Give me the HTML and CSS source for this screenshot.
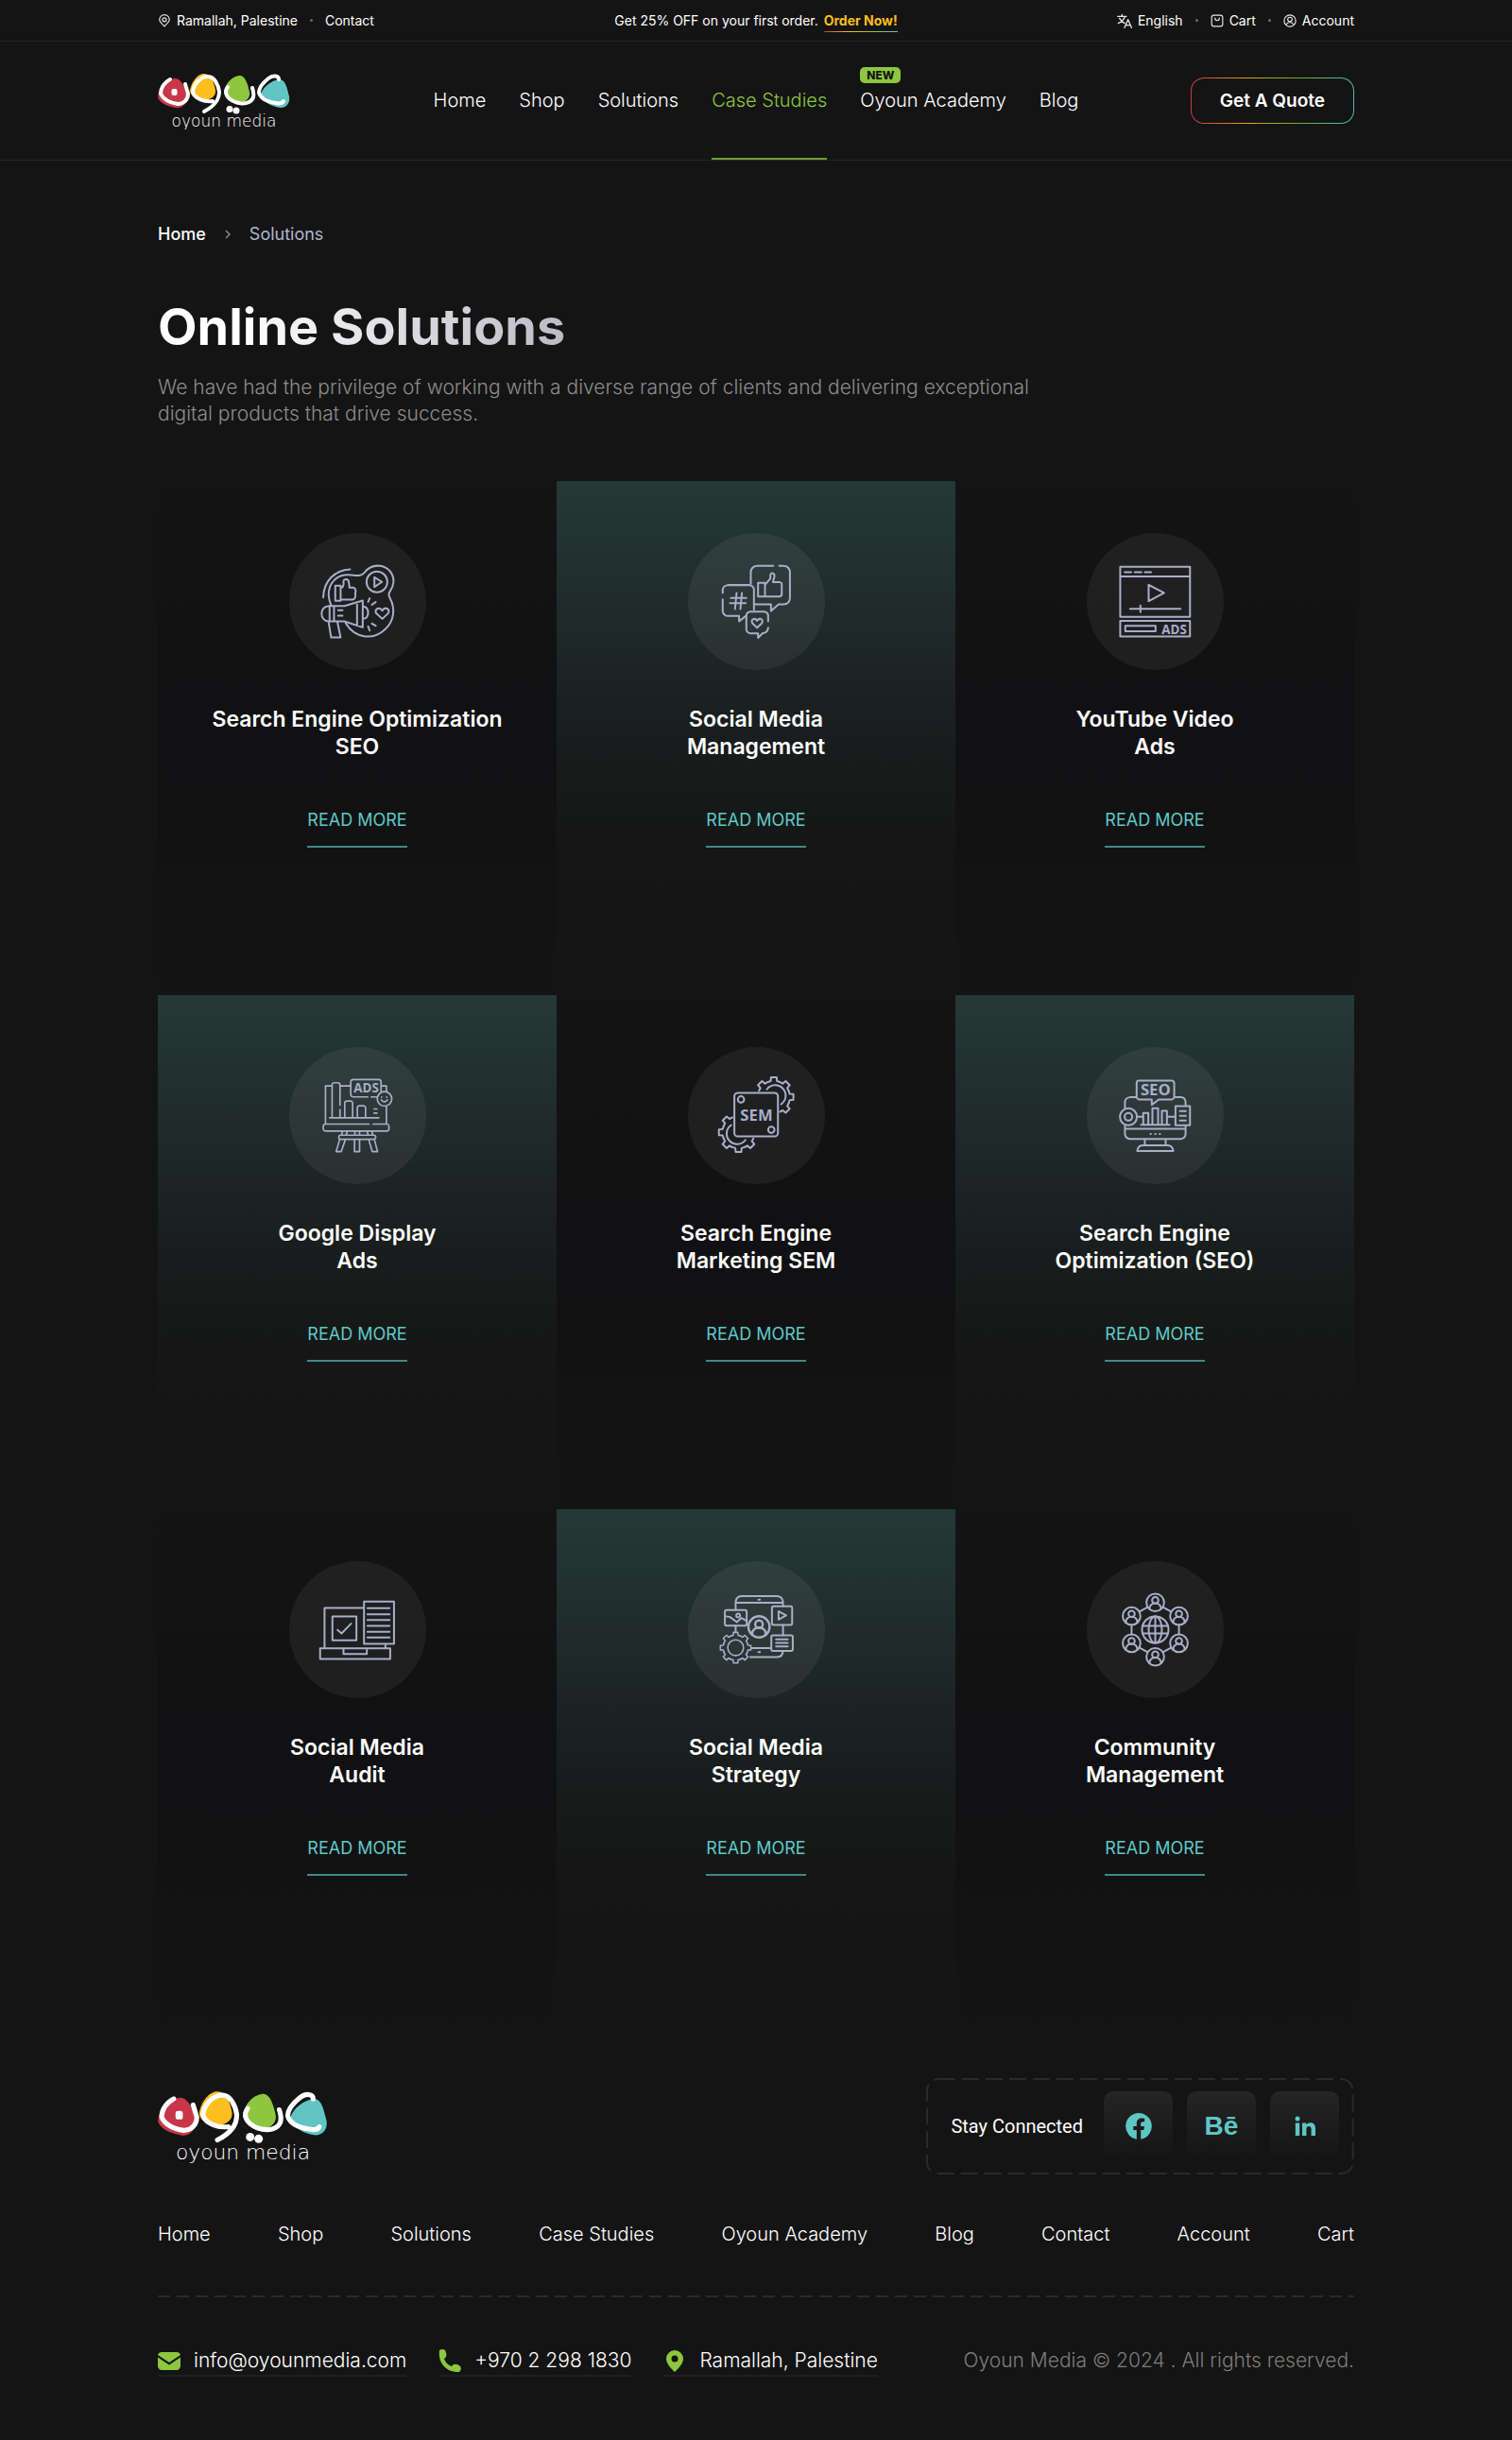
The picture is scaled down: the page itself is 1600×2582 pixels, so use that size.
FILE: index.html
```html
<!DOCTYPE html>
<html lang="en">
<head>
<meta charset="utf-8">
<meta name="viewport" content="width=device-width, initial-scale=1">
<title>Oyoun Media – Online Solutions</title>
<link rel="stylesheet" href="styles.css">
</head>
<body>
<svg class="sprite" aria-hidden="true">
  <symbol id="pin" viewBox="0 0 24 24"><path d="M12 22C8 18 3 14 3 10A9 9 0 0 1 21 10C21 14 16 18 12 22Z"/><circle cx="12" cy="10" r="3.500"/></symbol>
  <g id="tooth"><path d="M-19.500 -47A51 51 0 0 1 -10 -50L-9 -62H9L10 -50A51 51 0 0 1 19.500 -47"/></g>
  <g id="person"><circle r="28"/><circle cy="-7" r="10"/><path d="M-18 21V18A18 16 0 0 1 18 18V21"/></g>
</svg>

<div class="topbar">
  <div class="container topbar-grid">
    <div class="top-group">
      <a href="#"><svg class="ico ico-line" viewBox="0 0 24 24"><use href="#pin"/></svg>Ramallah, Palestine</a>
      <span class="dot"></span>
      <a href="#">Contact</a>
    </div>
    <p class="promo">Get 25% OFF on your first order. <a class="order" href="#">Order Now!</a></p>
    <div class="top-group top-right">
      <a href="#"><svg class="ico ico-line ico-lang" viewBox="0 0 24 24"><path d="M1 5H15M8 2V5M13 5C11 10 7 14 2 16M4 8C6 12 9 14 12 16M12 23L17.500 10L23 23M14 19H21"/></svg>English</a>
      <span class="dot"></span>
      <a href="#"><svg class="ico ico-line" viewBox="0 0 24 24"><rect x="2" y="2" width="20" height="20" rx="4"/><path d="M8 7C8 13 16 13 16 7"/></svg>Cart</a>
      <span class="dot"></span>
      <a href="#"><svg class="ico ico-line" viewBox="0 0 24 24"><circle cx="12" cy="12" r="10.500"/><circle cx="12" cy="9.500" r="4"/><path d="M6 18C8 14 16 14 18 18"/></svg>Account</a>
    </div>
  </div>
</div>

<header class="header">
  <div class="container header-grid">
    <a class="logo" href="#" aria-label="Oyoun Media"><svg viewBox="0 0 140 60">
      <g id="logo">
        <path fill="#c8364a" d="M19 6C26 7 30 18 31 27C30 34 25 38 19 37C8 35 1 31 0 25C1 16 10 6 19 6Z"/>
        <path fill="#fcbf1e" d="M48 1C41 2 35 11 34 19C35 26 42 29 50 29C58 28 62 23 61 18C59 9 56 0 48 1Z"/>
        <path fill="#8dc63f" d="M86 3C78 4 71 12 70 21C72 28 82 31 89 31C95 30 98 25 97 20C95 11 92 2 86 3Z"/>
        <path fill="#62c4c3" d="M129 7C120 8 111 15 109 23C111 31 121 36 130 37C137 37 140 31 139 25C137 17 135 7 129 7Z"/>
        <g fill="none" stroke="#fff" stroke-width="4" stroke-linecap="round" stroke-linejoin="round">
          <path d="M13 7C7 10 3 16 3 22C6 29 15 32 21 33C27 33 32 29 32 22L29 12"/>
          <path d="M58 30C50 31 39 28 37 20C38 12 45 4 53 4C60 4 64 13 65 20C65 29 60 35 49 41"/>
          <path d="M74 15C70 20 72 27 82 31C91 34 99 32 101 26C102 22 101 19 100 16"/>
          <path d="M128 7C128 3 122 2 117 6C112 10 107 15 107 21C109 28 118 31 125 32C129 33 132 32 133 30"/>
        </g>
        <g fill="#fff"><rect x="14.500" y="17" width="6" height="7" rx="2"/><circle cx="76" cy="38.500" r="3.500"/><circle cx="83" cy="40" r="3.500"/></g>
        <text class="logo-text" x="70" y="57" text-anchor="middle">oyoun media</text>
      </g>
    </svg></a>
    <nav class="nav">
      <a href="#">Home</a>
      <a href="#">Shop</a>
      <a href="#">Solutions</a>
      <a class="active" href="#">Case Studies</a>
      <a href="#">Oyoun Academy<span class="badge">NEW</span></a>
      <a href="#">Blog</a>
    </nav>
    <button class="quote" type="button">Get A Quote</button>
  </div>
</header>

<main class="container">
  <nav class="crumbs" aria-label="Breadcrumb">
    <a href="#">Home</a>
    <svg class="chevron" viewBox="0 0 8 12"><path d="M2 2L6 6L2 10"/></svg>
    <span>Solutions</span>
  </nav>
  <h1>Online Solutions</h1>
  <p class="intro">We have had the privilege of working with a diverse range of clients and delivering exceptional digital products that drive success.</p>

  <section class="grid">
    <article class="card">
      <svg class="art" viewBox="47 46 434 434">
        <path d="M240 161C190 163 156 200 155 250"/>
        <path d="M180 275C160 230 180 195 210 182C245 170 265 192 285 172C300 152 320 147 340 151C372 160 384 190 374 216C366 234 358 238 366 252C384 285 380 325 350 352C315 384 258 384 226 332"/>
        <circle cx="325" cy="201" r="33"/><path d="M317 186V217L341 201Z"/>
        <path d="M193 213H210V261H193ZM210 220C222 218 220 207 219 198C222 189 235 192 236 202L238 219H250C260 222 258 232 256 238C259 246 256 256 248 257H210"/>
        <path d="M175 277H222L280 260V345L222 326H175ZM189 277V326M262 266V339M175 277C143 275 140 328 175 326M172 329L180 377H210L200 329M202 291H216M202 308H216M282 280C302 277 302 320 282 317"/>
        <path d="M342 318L322 300C316 286 334 278 342 292C350 278 368 286 361 300ZM297 264L302 253M309 273L321 265M297 342L302 355M309 333L321 340"/>
      </svg>
      <h2>Search Engine Optimization<br>SEO</h2>
      <a class="more" href="#">READ MORE</a>
    </article>
    <article class="card teal">
      <svg class="art" viewBox="54 46 434 434">
        <path d="M324 150H273Q253 152 253 172V208M343 150H357Q377 152 377 172V252Q376 272 357 272H341L317 293V272H266"/>
        <path d="M276 204H298V247H276ZM298 210L315 190V178C319 170 329 173 328 184L323 202H345Q353 204 351 212V240Q350 247 343 247H298"/>
        <path d="M164 236V226Q166 213 180 211H248Q262 213 263 225V289M164 256V294Q166 307 180 309H216V326L237 309"/>
        <path d="M208 236L203 287M225 236L220 287M190 252H239M187 268H237"/>
        <path d="M308 326V306Q305 296 296 295H252Q240 296 239 308V352Q240 362 252 364H276V378L290 364Q307 362 308 346M273 346L258 332C252 319 266 313 273 324C281 313 295 319 288 332Z"/>
      </svg>
      <h2>Social Media<br>Management</h2>
      <a class="more" href="#">READ MORE</a>
    </article>
    <article class="card">
      <svg class="art" viewBox="60 46 434 434">
        <path d="M166 153H387V312H166ZM166 184H387M180 170H201M212 170H233M244 170H264M256 210V262L305 236ZM197 286H357M230 276V297M166 324H387V374H166ZM182 340H278V357H182Z"/>
        <text x="337" y="365">ADS</text>
      </svg>
      <h2>YouTube Video<br>Ads</h2>
      <a class="more" href="#">READ MORE</a>
    </article>

    <article class="card teal">
      <svg class="art art-fine" viewBox="47 47 434 434">
        <path d="M183 170H162V290M183 268V165Q184 160 190 160H202Q208 161 208 167V231M208 170H240M208 245V268M175 271H331M223 268V222Q224 218 230 218H242Q248 219 248 224V268M263 268V238Q264 233 270 233H283Q289 234 289 239V268M316 243H325M316 256H325"/>
        <path d="M296 205H249Q242 204 242 197V157Q243 150 250 150H331Q338 151 338 157V188M307 205H326M338 170H355V188M355 236V290M300 291H162Q155 292 155 298V308Q156 313 162 313H357Q363 312 363 306V297Q362 291 357 291H313"/>
        <circle cx="349" cy="211" r="23"/><path d="M339 214C343 222 354 222 358 214M340 205V206M356 205V206M208 326H316Q322 327 321 333Q320 339 315 339H210Q204 338 204 332Q204 327 208 326ZM213 325L216 314M228 325L231 314M255 325V314M270 325V314M297 325L294 314M312 325L309 314M207 340L196 378H212L225 340M254 340V378H270V340M299 340L310 378H327L317 340"/>
        <text x="291" y="192">ADS</text>
      </svg>
      <h2>Google Display<br>Ads</h2>
      <a class="more" href="#">READ MORE</a>
    </article>
    <article class="card">
      <svg class="art" viewBox="54 47 434 434">
        <rect x="201" y="192" width="138" height="138" rx="11"/><circle cx="222" cy="213" r="10"/><circle cx="318" cy="309" r="10"/>
        <g transform="translate(326 205)"><use href="#tooth" transform="rotate(-45)"/><use href="#tooth"/><use href="#tooth" transform="rotate(45)"/><use href="#tooth" transform="rotate(90)"/><use href="#tooth" transform="rotate(135)"/><path d="M-22 -24A33 33 0 1 1 23 23"/></g>
        <g transform="translate(214 317)"><use href="#tooth" transform="rotate(135)"/><use href="#tooth" transform="rotate(180)"/><use href="#tooth" transform="rotate(225)"/><use href="#tooth" transform="rotate(270)"/><use href="#tooth" transform="rotate(315)"/><path d="M22 24A33 33 0 1 1 -23 -23"/></g>
        <text class="big" x="271" y="279">SEM</text>
      </svg>
      <h2>Search Engine<br>Marketing SEM</h2>
      <a class="more" href="#">READ MORE</a>
    </article>
    <article class="card teal">
      <svg class="art" viewBox="60 47 434 434">
        <path d="M217 206H196Q182 208 181 220V240M181 296V324Q184 337 196 338H358Q371 336 373 324V298M373 230V220Q371 207 358 206H337M181 306H373M218 158Q219 153 225 153H330Q336 154 337 160V206Q336 212 330 213H288L266 230V213H225Q219 212 218 206Z"/>
        <circle cx="192" cy="268" r="27"/><circle cx="192" cy="268" r="12"/>
        <path d="M219 268H237M316 268H340M232 293H322M239 292V256H255V292M268 292V241H286V292M298 292V249H314V292M341 234H387V295H341ZM355 250H374M355 265H374M355 280H374M262 322H263M277 322H278M291 322H292M244 340V357M310 340V357M220 376Q222 359 236 358H318Q332 360 334 376Z"/>
        <text class="big" x="278" y="199">SEO</text>
      </svg>
      <h2>Search Engine<br>Optimization (SEO)</h2>
      <a class="more" href="#">READ MORE</a>
    </article>

    <article class="card">
      <svg class="art" viewBox="-217 -217 434 434">
        <path d="M20 -69H-105V59M88 45V59M20 -89H115V45H20ZM31 -68H101M31 -49H101M31 -31H101M31 -12H101M31 7H101M31 25H101M-80 -42H-4V34H-80ZM-64 1L-51 12L-21 -19M-119 59H103V93H-119ZM-45 61V77H29V61"/>
      </svg>
      <h2>Social Media<br>Audit</h2>
      <a class="more" href="#">READ MORE</a>
    </article>
    <article class="card teal">
      <svg class="art" viewBox="-217 -217 434 434">
        <path d="M-66 -63V-88Q-64 -105 -48 -106H66Q82 -104 84 -88V-74M-66 -85H84M6 -95H11M84 -15V18M84 67Q83 86 66 87H-20M-14 58H47M6 71H11M-66 -13V5M62 31H99M62 42H99M62 53H99M70 -58V-32L94 -45ZM-100 -43L-84 -40L-62 -24L-48 -37L-31 -28"/>
        <rect x="-100" y="-62" width="69" height="49" rx="5"/><circle cx="-58" cy="-45" r="6"/><rect x="49" y="-74" width="64" height="59" rx="5"/><rect x="47" y="18" width="68" height="49" rx="5"/>
        <g transform="translate(8 -9) scale(1.200)"><use href="#person"/></g>
        <g transform="translate(-66 57) scale(.78)"><use href="#tooth"/><use href="#tooth" transform="rotate(45)"/><use href="#tooth" transform="rotate(90)"/><use href="#tooth" transform="rotate(135)"/><use href="#tooth" transform="rotate(180)"/><use href="#tooth" transform="rotate(225)"/><use href="#tooth" transform="rotate(270)"/><use href="#tooth" transform="rotate(315)"/><circle r="32"/></g>
      </svg>
      <h2>Social Media<br>Strategy</h2>
      <a class="more" href="#">READ MORE</a>
    </article>
    <article class="card">
      <svg class="art" viewBox="-217 -217 434 434">
        <circle r="42"/><ellipse rx="21" ry="42"/><path d="M0 -42V42M-40 -12H40M-40 12H40M-25 -71L-50 -57M25 -71L50 -57M-25 71L-50 57M25 71L50 57M-75 -15V15M75 -15V15"/>
        <use href="#person" y="-86"/><use href="#person" y="86"/><use href="#person" x="-75" y="-43"/><use href="#person" x="75" y="-43"/><use href="#person" x="-75" y="43"/><use href="#person" x="75" y="43"/>
      </svg>
      <h2>Community<br>Management</h2>
      <a class="more" href="#">READ MORE</a>
    </article>
  </section>
</main>

<footer class="container footer">
  <div class="foot-top">
    <a class="foot-logo" href="#" aria-label="Oyoun Media"><svg viewBox="0 0 140 60"><use href="#logo"/></svg></a>
    <div class="social">
      <svg class="social-frame" aria-hidden="true"><rect x="1" y="1" rx="12"/></svg>
      <span>Stay Connected</span>
      <a href="#" aria-label="Facebook"><svg viewBox="0 0 28 28"><path d="M14 0A14 14 0 0 0 11.800 27.800V18H8.300V14H11.800V11C11.800 7.500 13.900 5.600 17.100 5.600C18.600 5.600 20.200 5.900 20.200 5.900V9.300H18.400C16.700 9.300 16.200 10.400 16.200 11.500V14H20L19.400 18H16.200V27.800A14 14 0 0 0 14 0Z"/></svg></a>
      <a class="behance" href="#" aria-label="Behance">Bē</a>
      <a href="#" aria-label="LinkedIn"><svg viewBox="0 0 28 28"><circle cx="6" cy="6" r="2.500"/><path d="M3.800 10.500H8.200V24H3.800ZM11 10.500H15.200V12.400C17.500 9 25 9 25 16V24H20.600V17C20.600 13 15.400 13 15.400 17V24H11Z"/></svg></a>
    </div>
  </div>
  <nav class="foot-nav">
    <a href="#">Home</a><a href="#">Shop</a><a href="#">Solutions</a><a href="#">Case Studies</a><a href="#">Oyoun Academy</a><a href="#">Blog</a><a href="#">Contact</a><a href="#">Account</a><a href="#">Cart</a>
  </nav>
  <div class="foot-bottom">
    <address>
      <a href="#"><svg class="fico" viewBox="0 0 24 24"><path d="M4 3H20Q23 3 24 6L12 14L0 6Q1 3 4 3ZM0 8.500L12 16.500L24 8.500V18Q23 22 20 22H4Q1 22 0 18Z"/></svg>info@oyounmedia.com</a>
      <a href="#"><svg class="fico" viewBox="0 0 24 24"><path d="M1 1Q4 -1 7 1Q9 5 8 8L6 10Q8 16 14 18L16 16Q20 15 23 18Q25 21 22 24C9 25 -1 15 1 1Z"/></svg>+970 2 298 1830</a>
      <a href="#"><svg class="fico" viewBox="0 0 24 24"><path fill-rule="evenodd" d="M12 24C7 19 3 15 3 10A9 9 0 0 1 21 10C21 15 17 19 12 24ZM12 6.500A3.500 3.500 0 1 0 12 13.500A3.500 3.500 0 1 0 12 6.500Z"/></svg>Ramallah, Palestine</a>
    </address>
    <p>Oyoun Media © 2024 . All rights reserved.</p>
  </div>
</footer>
</body>
</html>
```
FILE: styles.css
```css
* { box-sizing: border-box; }
body {
  margin: 0;
  background: #141414;
  color: #fff;
  font-family: Inter, "Liberation Sans", sans-serif;
  font-size: 20px;
}
a { color: inherit; text-decoration: none; }
h1, h2, p { margin: 0; }
.sprite { position: absolute; width: 0; height: 0; }
.container { width: 100%; max-width: 1306px; margin: 0 auto; padding: 0 20px; }
.logo-text { font-family: "DejaVu Sans", sans-serif; font-weight: 200; font-size: 17px; fill: #fff; }

/* Top bar */
.topbar { border-bottom: 1px solid #262626; font-size: 14px; line-height: 16px; }
.topbar-grid { display: grid; grid-template-columns: 1fr auto 1fr; align-items: center; height: 43px; }
.top-group { display: flex; align-items: center; gap: 13px; }
.top-group a { display: flex; align-items: center; gap: 6px; }
.top-right { justify-content: flex-end; }
.dot { width: 3px; height: 3px; border-radius: 50%; background: #6b6b6b; }
.ico { width: 14px; height: 14px; }
.ico-line { fill: none; stroke: #e6e6e6; stroke-width: 2; stroke-linecap: round; stroke-linejoin: round; }
.ico-lang { width: 16px; height: 16px; }
.order {
  margin-left: 2px;
  padding-bottom: 4px;
  color: #fcbf1e;
  font-weight: 700;
  background: linear-gradient(90deg, #c8364a, #fcbf1e, #8dc63f, #62c4c3) bottom / 100% 1px no-repeat;
}

/* Header */
.header { border-bottom: 1px solid #262626; }
.header-grid { display: grid; grid-template-columns: 1fr auto 1fr; align-items: center; }
.logo svg { display: block; width: 140px; height: 60px; }
.nav { display: flex; gap: 35px; }
.nav a {
  position: relative;
  padding: 50px 0 49px;
  border-bottom: 2px solid transparent;
  font-size: 20px;
  line-height: 24px;
  font-weight: 300;
}
.nav .active { color: #8dc63f; border-bottom-color: #6f9e33; }
.badge {
  position: absolute;
  left: 0;
  top: 27px;
  padding: 0 7px;
  border-radius: 5px;
  background: #8dc63f;
  color: #141414;
  font-size: 12px;
  line-height: 17px;
  font-weight: 800;
}
.quote {
  justify-self: end;
  padding: 12px 30px;
  border: 1px solid transparent;
  border-radius: 14px;
  background: linear-gradient(#141414, #141414) padding-box, linear-gradient(90deg, #c8364a, #e0a010, #6fae30, #55b8b4) border-box;
  color: #fff;
  font: 600 19px/23px Inter, "Liberation Sans", sans-serif;
}

/* Intro */
.crumbs { display: flex; align-items: center; gap: 19px; padding-top: 67px; font-size: 18px; line-height: 22px; }
.crumbs a { font-weight: 500; }
.crumbs span { color: #b0b5d0; }
.chevron { width: 8px; height: 12px; fill: none; stroke: #8a8a8a; stroke-width: 1.5; }
h1 {
  width: fit-content;
  margin-top: 53px;
  font-size: 54px;
  line-height: 68px;
  font-weight: 700;
  background: linear-gradient(90deg, #fff 20%, #bcbac4);
  -webkit-background-clip: text;
  background-clip: text;
  color: transparent;
}
.intro { max-width: 950px; margin-top: 16px; color: #8c8c8c; font-size: 21px; line-height: 28px; font-weight: 300; }

/* Service cards */
.grid { display: grid; grid-template-columns: repeat(3, 1fr); margin-top: 57px; }
.card {
  display: flex;
  flex-direction: column;
  align-items: center;
  padding: 55px 20px 156px;
  text-align: center;
  background: linear-gradient(#141414, #111113 42%, #111113 55%, #141414);
}
.card.teal { background: linear-gradient(#253937, #1f2b2a 25%, #191d1d 50%, #151615 72%, #141414); }
.art {
  width: 145px;
  height: 145px;
  border-radius: 50%;
  background: rgba(255, 255, 255, .06);
  fill: none;
  stroke: #a9aec9;
  stroke-width: 6;
  stroke-linecap: round;
  stroke-linejoin: round;
}
.art-fine { stroke-width: 5; }
.art text {
  fill: #a9aec9;
  stroke: none;
  text-anchor: middle;
  font-family: "Open Sans", Inter, sans-serif;
  font-size: 40px;
  font-weight: 700;
}
.art .big { font-size: 50px; }
h2 { margin-top: 38px; font-size: 23px; line-height: 29px; font-weight: 600; }
.more {
  margin-top: 52px;
  padding-bottom: 16px;
  border-bottom: 2px solid #3f8a88;
  color: #5fc9c5;
  font-size: 18px;
  line-height: 22px;
}

/* Footer */
.footer { padding-top: 58px; padding-bottom: 58px; }
.foot-top { display: flex; justify-content: space-between; align-items: center; }
.foot-logo svg { display: block; width: 180px; height: 77px; }
.social { position: relative; display: flex; align-items: center; gap: 15px; padding: 14px 16px 14px 26px; font: 500 20px/24px Roboto, sans-serif; }
.social span { margin-right: 7px; font-weight: 400; }
.social-frame { position: absolute; left: 0; top: 0; width: 100%; height: 100%; }
.social-frame rect {
  width: calc(100% - 2px);
  height: calc(100% - 2px);
  fill: none;
  stroke: #2a2a2a;
  stroke-width: 2;
  stroke-dasharray: 18 7;
}
.social a {
  position: relative;
  display: grid;
  place-items: center;
  width: 73px;
  height: 74px;
  border-radius: 10px;
  background: linear-gradient(#252525, #141414);
  color: #5fc6c4;
}
.social a svg { width: 28px; height: 28px; fill: #5fc6c4; }
.social .behance { font: 700 28px/32px "Liberation Sans", sans-serif; }
.foot-nav { display: flex; justify-content: space-between; margin-top: 51px; font-size: 20px; line-height: 24px; font-weight: 300; }
.foot-bottom {
  display: flex;
  justify-content: space-between;
  margin-top: 53px;
  padding-top: 57px;
  background: repeating-linear-gradient(90deg, #2a2a2a 0 13px, transparent 13px 20px) top / 100% 2px no-repeat;
  font-size: 21px;
  line-height: 24px;
  font-weight: 300;
}
address { display: flex; gap: 34px; font-style: normal; }
address a { display: flex; align-items: center; gap: 14px; padding-bottom: 3px; border-bottom: 2px solid #1f1f1f; }
.fico { width: 24px; height: 24px; fill: #8dc63f; }
.foot-bottom p { color: #7d7d7d; }
```
